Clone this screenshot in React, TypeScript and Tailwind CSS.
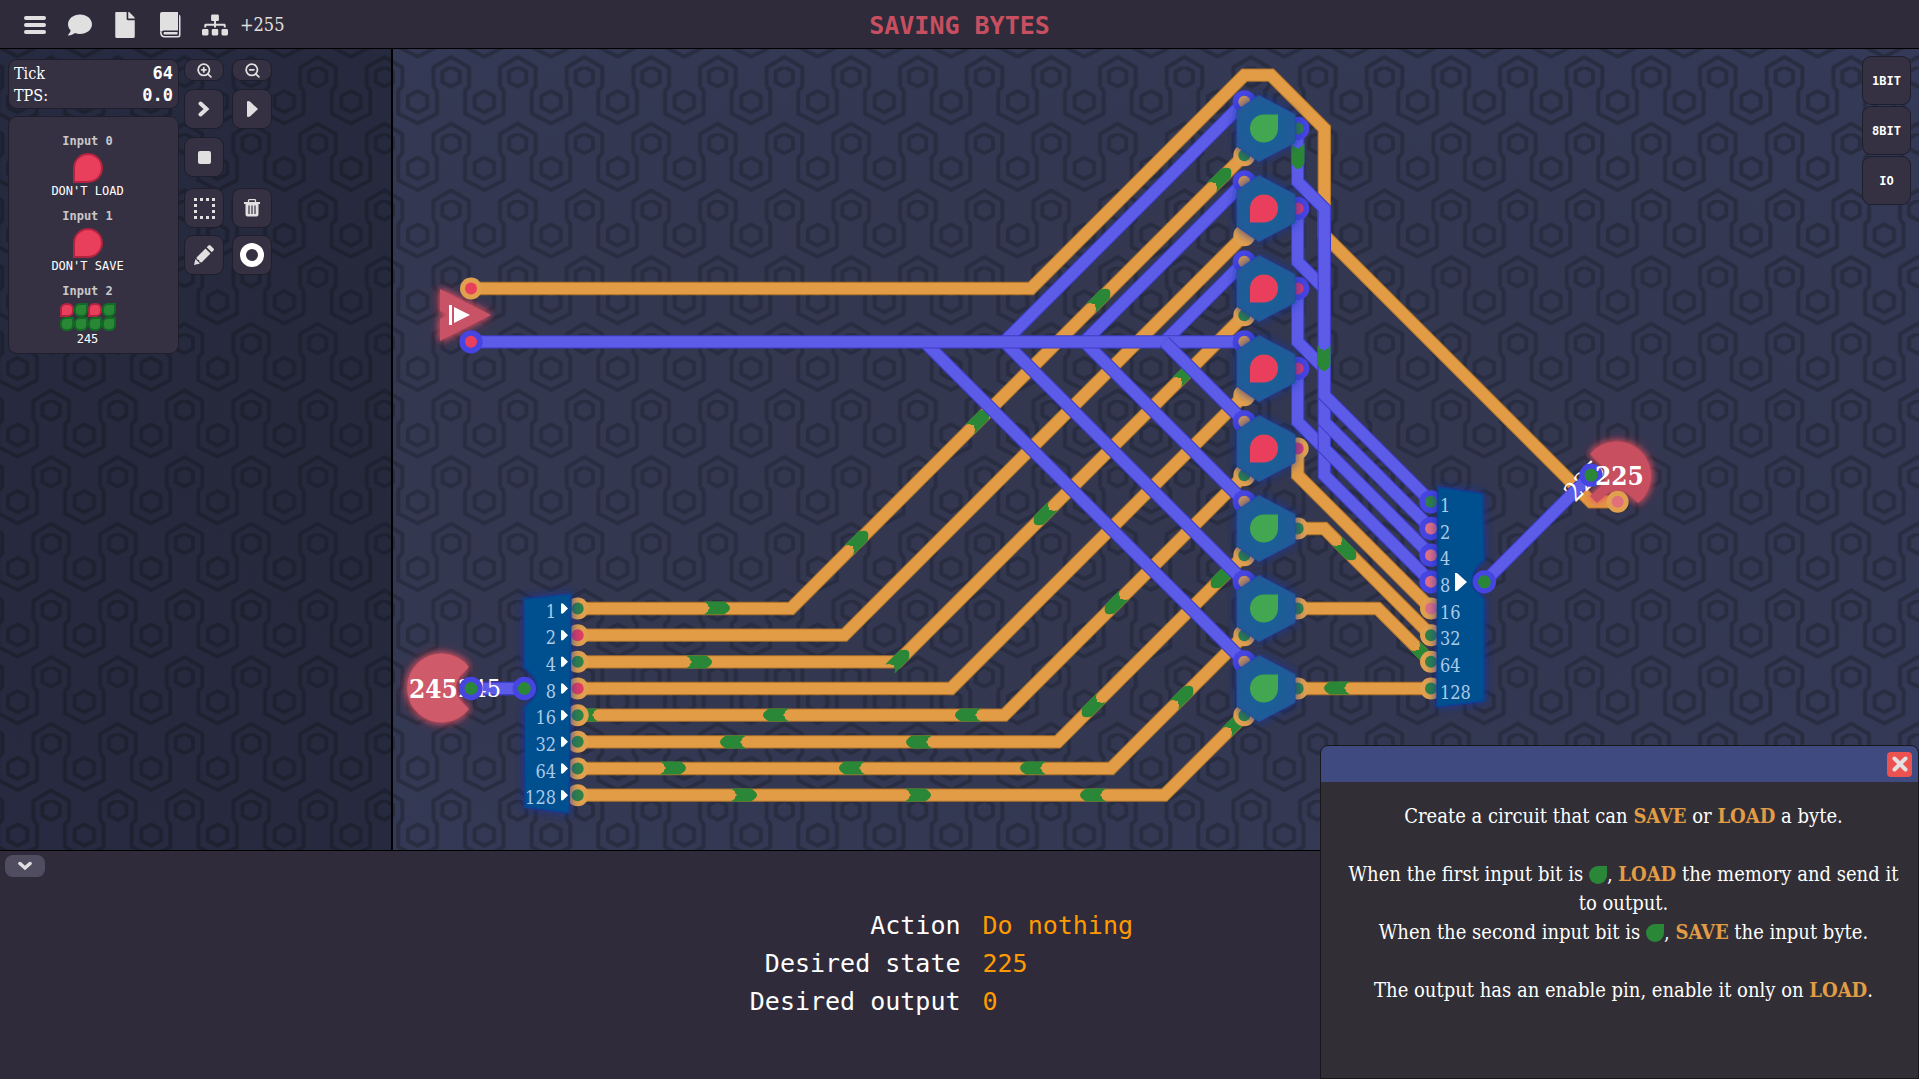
import type { ReactNode } from "react";
import { FaComment, FaFile, FaSitemap } from "react-icons/fa";
import { ZoomIn, ZoomOut } from "lucide-react";

/* ---------- circuit board grid ---------- */

const CELL = 80 / 3;
const gx = (i: number) => 471 + i * CELL;
const gy = (j: number) => 128.5 + j * CELL;

type Pt = [number, number];
type Hue = "orange" | "blue";

const hues = {
  orange: { core: "#e29c45", edge: "#b4772c", ring: "#e0a04e" },
  blue: { core: "#5c5ce8", edge: "#3e3cc9", ring: "#4645e2" },
};

const bits = [1, 0, 1, 0, 1, 1, 1, 1];
const GREEN = "#2a8737";
const RED = "#e93e5c";
const values = [1, 2, 4, 8, 16, 32, 64, 128];

const orangeWires: Pt[][] = [
  ...bits.map((_, k): Pt[] => [[4, 18 + k], [12 + 2 * k, 18 + k], [29, 3 * k + 1]]),
  [[0, 6], [21, 6], [29, -2], [30, -2], [32, 0], [32, 4], [42, 14], [43, 14]],
  [[31, 12], [31, 13], [36, 18]],
  [[31, 15], [32, 15], [36, 19]],
  [[31, 18], [34, 18], [36, 20]],
  [[31, 21], [36, 21]],
];

const blueWires: Pt[][] = [
  [[20, 8], [29, -1]],
  [[23, 8], [29, 2]],
  [[26, 8], [29, 5]],
  [[17, 8], [29, 20]],
  [[20, 8], [29, 17]],
  [[23, 8], [29, 14]],
  [[0, 8], [29, 8]],
  [[26, 8], [29, 11]],
  [[31, 9], [31, 11], [32, 12], [32, 13], [36, 17]],
  [[31, 6], [31, 8], [32, 9], [32, 12], [36, 16]],
  [[31, 3], [31, 5], [32, 6], [32, 11], [36, 15]],
  [[31, 0], [31, 2], [32, 3], [32, 10], [36, 14]],
  [[0, 21], [2, 21]],
  [[38, 17], [42, 13]],
];

/* x, y, heading in degrees */
const orangePulses: [number, number, number][] = [
  [717, 608, 0], [858, 541, -45], [979, 420, -45], [1100, 299, -45], [1221, 178, -45],
  [699, 662, 0], [899, 660, -45], [1044, 515, 135], [1186, 373, -45],
  [585, 715, 180], [776, 715, 180], [968, 715, 180], [1115, 604, 135],
  [733, 742, 180], [919, 742, 180], [1092, 707, 135], [1221, 578, 135],
  [673, 768, 0], [852, 768, 180], [1033, 768, 180], [1183, 696, -45],
  [744, 795, 0], [918, 795, 0], [1093, 795, 180], [1236, 723, -45],
  [1346, 550, 45], [1424, 655, 45], [1337, 688, 180],
];
const bluePulses: [number, number, number][] = [[1298, 156, 90], [1324, 358, 90]];

function Wire({ pts, hue }: { pts: Pt[]; hue: Hue }) {
  const p = pts.map(([i, j]) => `${gx(i)},${gy(j)}`).join(" ");
  return (
    <g fill="none">
      <polyline points={p} stroke={hues[hue].edge} strokeWidth={13.4} />
      <polyline points={p} stroke={hues[hue].core} strokeWidth={11.2} />
    </g>
  );
}

function Pulse({ x, y, a }: { x: number; y: number; a: number }) {
  return (
    <path
      transform={`translate(${x} ${y}) rotate(${a})`}
      d="M-13 -6.5H7Q13 -3 13 0Q13 3 7 6.5H-13L-9 3.5V2L-7 0L-9 -2V-3.5Z"
      fill={GREEN}
    />
  );
}

function Pin({ i, j, hue, fill, inner = 6 }: { i: number; j: number; hue: Hue; fill: string; inner?: number }) {
  return (
    <g>
      <circle cx={gx(i)} cy={gy(j)} r={hue === "blue" ? 11.7 : 11} fill={hues[hue].ring} />
      <circle cx={gx(i)} cy={gy(j)} r={inner} fill={fill} />
    </g>
  );
}

function Gate({ y, on }: { y: number; on: boolean }) {
  return (
    <g transform={`translate(1264 ${y})`}>
      <path
        d="M-5 -33L31 -14V14L-5 33L-27 18V-18Z"
        fill="url(#gateFill)"
        stroke="#2050a0"
        strokeWidth="1"
        strokeLinejoin="round"
        filter="url(#glowBlue)"
      />
      {on ? (
        <path d="M14 -14H0A14 14 0 1 0 14 0Z" fill="#43a650" />
      ) : (
        <path d="M-14 14H0A14 14 0 1 0 -14 0Z" fill={RED} />
      )}
    </g>
  );
}

function Circuit() {
  return (
    <svg className="absolute inset-0 h-full w-full" aria-label="Circuit board">
      <defs>
        <pattern
          id="hex"
          width="200"
          height="200"
          patternUnits="userSpaceOnUse"
          patternTransform="translate(0 -49) scale(0.33333)"
        >
          <g fill="none" stroke="#292d41" strokeWidth="12" strokeLinejoin="round">
            {[[0, 0], [-200, 0], [0, 200], [-200, 200], [0, -200], [-200, -200]].map(([x, y]) => (
              <path
                key={`${x}.${y}`}
                transform={`translate(${x} ${y})`}
                d="M100 60V2L153 -29L207 2V60L195 72V141L253 170L311 141V72L300 60"
              />
            ))}
            <path d="M153 0L179 15V46L153 60L127 46V15Z" />
            <path d="M53 73L82 88V122L53 137L24 122V88Z" />
          </g>
        </pattern>
        <radialGradient id="board" cx="0.5" cy="0.5" r="0.75">
          <stop offset="0.4" stopColor="#333750" />
          <stop offset="1" stopColor="#343a58" />
        </radialGradient>
        <radialGradient id="gateFill">
          <stop offset="0" stopColor="#1d6296" />
          <stop offset="1" stopColor="#205a98" />
        </radialGradient>
        <filter id="glowBlue" x="-50%" y="-50%" width="200%" height="200%">
          <feDropShadow dx="0" dy="0" stdDeviation="5" floodColor="#1230a0" floodOpacity="0.9" />
        </filter>
        <filter id="glowRed" x="-50%" y="-50%" width="200%" height="200%">
          <feDropShadow dx="0" dy="0" stdDeviation="3" floodColor="#e8505f" floodOpacity="0.8" />
          <feDropShadow dx="0" dy="0" stdDeviation="5" floodColor="#e8505f" floodOpacity="0.7" />
        </filter>
      </defs>
      <rect width="100%" height="100%" fill="url(#board)" />
      <rect width="100%" height="100%" fill="url(#hex)" />

      <g transform="translate(0 -49)">
        <path
          d="M440 289L491 315L440 341V319L448 315L440 311Z"
          fill="#c95366"
          filter="url(#glowRed)"
        />
        <path d="M449 305H452V325H449ZM454 307L470 315L454 323Z" fill="#fff" />

        {orangeWires.map((w, n) => <Wire key={n} pts={w} hue="orange" />)}
        {orangePulses.map(([x, y, a], n) => <Pulse key={n} x={x} y={y} a={a} />)}
        {blueWires.map((w, n) => <Wire key={n} pts={w} hue="blue" />)}
        {bluePulses.map(([x, y, a], n) => <Pulse key={n} x={x} y={y} a={a} />)}

        <Pin i={0} j={6} hue="orange" fill={RED} />
        <Pin i={0} j={8} hue="blue" fill={RED} />

        {bits.map((on, k) => (
          <g key={k}>
            <Pin i={29} j={3 * k - 1} hue="blue" fill="#cc935c" />
            <Pin i={29} j={3 * k + 1} hue="orange" fill={on ? "#2f8148" : "#dd9a50"} />
            <Pin i={31} j={3 * k} hue={k < 4 ? "blue" : "orange"} fill={k === 0 || k > 4 ? "#2f8148" : "#cf3d76"} />
          </g>
        ))}
        {values.map((v, k) => (
          <g key={v}>
            <Pin i={4} j={18 + k} hue="orange" fill={bits[k] ? "#2f8148" : "#dd3d64"} />
            <Pin
              i={36}
              j={14 + k}
              hue={k < 4 ? "blue" : "orange"}
              fill={k === 0 || k > 4 ? "#2f8148" : "#de6f86"}
            />
          </g>
        ))}

        {bits.map((_, k) => (
          <Gate key={k} y={gy(3 * k)} on={k === 0 || k > 4} />
        ))}

        {/* byte splitter */}
        <path
          d="M524 599L571 594L569 813L525 807V707L532 700Q537 694 537 688Q537 681 532 675L524 667Z"
          fill="#00508f"
          stroke="#0b3f96"
          strokeWidth="1.5"
          filter="url(#glowBlue)"
        />
        {values.map((v, k) => (
          <g key={v}>
            <text
              x={556}
              y={gy(18 + k) + 9}
              textAnchor="end"
              fill="#a9cbe8"
              className="font-['DejaVu_Serif_Condensed','DejaVu_Serif',serif] text-[18px]"
            >
              {v}
            </text>
            <path transform={`translate(561 ${gy(18 + k)})`} d="M0 -5H2L7 0L2 5H0Z" fill="#fff" />
          </g>
        ))}

        {/* 245 source */}
        <path
          d="M469 667L461 675Q456 681 456 688Q456 695 461 701L469 709A34.5 34.5 0 1 1 469 667Z"
          fill="#cf5a69"
          filter="url(#glowRed)"
        />
        <Wire pts={[[0, 21], [2, 21]]} hue="blue" />
        <text
          x={501}
          y={697}
          textAnchor="end"
          fill="#fff"
          className="font-['DejaVu_Serif_Condensed','DejaVu_Serif',serif] text-[25px]"
        >
          245
        </text>
        <text
          x={409}
          y={698}
          fill="#fff"
          className="font-['DejaVu_Serif_Condensed','DejaVu_Serif',serif] text-[26px] font-bold"
        >
          245
        </text>
        <Pin i={0} j={21} hue="blue" fill="#2a8737" inner={6.5} />
        <Pin i={2} j={21} hue="blue" fill="#2a8737" inner={6.5} />

        {/* byte maker */}
        <path
          d="M1438 487L1483 494L1484 560L1477 567Q1472 574 1472 582Q1472 590 1477 592L1484 599V701L1437 707Z"
          fill="#00508f"
          stroke="#0b3f96"
          strokeWidth="1.5"
          filter="url(#glowBlue)"
        />
        {values.map((v, k) => (
          <text
            key={v}
            x={1440}
            y={gy(14 + k) + 10}
            fill="#a9cbe8"
            className="font-['DejaVu_Serif_Condensed','DejaVu_Serif',serif] text-[18px]"
          >
            {v}
          </text>
        ))}
        <path d="M1455 573H1457L1467 582L1457 591H1455Z" fill="#fff" />
        <Pin i={38} j={17} hue="blue" fill="#2a8737" inner={6.5} />

        {/* 225 output */}
        <path
          d="M1590 454L1600 464Q1606 470 1606 476Q1606 482 1600 487L1590 496L1597 503L1608 493Q1617 488 1627 493L1638 503A34.5 34.5 0 1 0 1590 454Z"
          fill="#c74f60"
          filter="url(#glowRed)"
        />
        <text
          transform="translate(1575 503) rotate(-45)"
          fill="#fff"
          className="font-['DejaVu_Serif_Condensed','DejaVu_Serif',serif] text-[26px]"
        >
          225
        </text>
        <Pin i={42} j={13} hue="blue" fill="#2a8737" inner={6.5} />
        <Pin i={43} j={14} hue="orange" fill="#e07079" />
        <text
          x={1595}
          y={485}
          fill="#fff"
          className="font-['DejaVu_Serif_Condensed','DejaVu_Serif',serif] text-[26px] font-bold"
        >
          225
        </text>
      </g>
    </svg>
  );
}

/* ---------- chrome ---------- */

function ToolButton({ label, short, children }: { label: string; short?: boolean; children: ReactNode }) {
  return (
    <button
      aria-label={label}
      className={`flex w-[38px] items-center justify-center rounded-lg bg-[#353142] text-[#e0e0e0] shadow-[0_0_0_1px_#1d1f2c] ${
        short ? "h-5" : "h-[38px]"
      }`}
    >
      {children}
    </button>
  );
}

function IconBook() {
  return (
    <svg viewBox="0 0 21 26" className="h-[26px] w-[21px]" fill="#e0e0e0">
      <path d="M2 0H18V18.5H3.5Q1.5 19 1 20.5L0 19V2Q0 0 2 0Z" />
      <path d="M19 2.500Q20.500 3 20.500 5V23Q20.500 25.500 18 25.500H4Q0 25 0 20H1.500Q2 24 4.500 24H17.500Q19 24 19 22.500Z" />
      <path d="M4 20H17.500V22.500H4Q2.700 21.200 4 20Z" />
    </svg>
  );
}

function TopBar() {
  return (
    <header className="grid h-[49px] grid-cols-3 items-center border-b border-black bg-[#2f2b3b] px-6">
      <nav className="flex items-center pt-0.5 text-[#e0e0e0]">
        <button aria-label="Menu" className="flex h-[18px] w-[22px] flex-col justify-between">
          <span className="h-1 w-full rounded-full bg-[#e0e0e0]" />
          <span className="h-1 w-full rounded-full bg-[#e0e0e0]" />
          <span className="h-1 w-full rounded-full bg-[#e0e0e0]" />
        </button>
        <button aria-label="Chat" className="ml-[22px]"><FaComment size={24} /></button>
        <button aria-label="Notes" className="ml-5"><FaFile size={26} /></button>
        <button aria-label="Manual" className="ml-[22px]"><IconBook /></button>
        <button aria-label="Level tree" className="ml-[21px] flex items-center gap-3 font-['DejaVu_Serif_Condensed','DejaVu_Serif',serif] text-lg">
          <FaSitemap size={26} />
          +255
        </button>
      </nav>
      <h1 className="pt-1 text-center font-['DejaVu_Sans_Mono',monospace] text-[25px] leading-8 font-bold text-[#c74f60]">
        SAVING BYTES
      </h1>
    </header>
  );
}

function InputSlot({ name, value, children }: { name: string; value: string; children: ReactNode }) {
  return (
    <div className="flex flex-col items-center font-['DejaVu_Sans_Mono',monospace] text-xs">
      <span className="mb-[3px] leading-[18px] font-bold text-[#c9c8ca]">{name}</span>
      {children}
      <span className="leading-4 text-white">{value}</span>
    </div>
  );
}

function LeftPanel() {
  return (
    <aside className="z-10 flex w-[393px] items-start gap-[7px] border-r-2 border-black bg-black/25 pt-[11px] pl-[9px]">
      <div className="flex w-[169px] flex-col gap-[9px]">
        <dl className="rounded-lg bg-[#353142] px-[5px] pt-[3px] pb-px font-['DejaVu_Serif_Condensed','DejaVu_Serif',serif] text-base text-white shadow-[0_0_0_1px_#1d1f2c]">
          <div className="flex h-[22px] items-center justify-between">
            <dt>Tick</dt>
            <dd className="font-['DejaVu_Sans_Mono',monospace] text-[17px] font-bold">64</dd>
          </div>
          <div className="flex h-[22px] items-center justify-between">
            <dt>TPS:</dt>
            <dd className="font-['DejaVu_Sans_Mono',monospace] text-[17px] font-bold">0.0</dd>
          </div>
        </dl>
        <section className="flex flex-col items-center gap-2 rounded-lg bg-[#353142] pt-[15px] pr-3 pb-[6px] shadow-[0_0_0_1px_#1d1f2c]">
          <InputSlot name="Input 0" value="DON'T LOAD">
            <i className="size-[30px] rounded-full rounded-bl-none border-2 border-[#b02440] bg-[#e93e5c]" />
          </InputSlot>
          <InputSlot name="Input 1" value="DON'T SAVE">
            <i className="size-[30px] rounded-full rounded-bl-none border-2 border-[#b02440] bg-[#e93e5c]" />
          </InputSlot>
          <InputSlot name="Input 2" value="245">
            <div className="grid grid-cols-4">
              {[0, 1, 0, 1, 1, 1, 1, 1].map((b, n) => (
                <i
                  key={n}
                  className={
                    b
                      ? "size-[14px] rounded-[6px] rounded-tr-none border-2 border-[#126b22] bg-[#2a8737]"
                      : "size-[14px] rounded-[6px] rounded-bl-none border-2 border-[#b02440] bg-[#e93e5c]"
                  }
                />
              ))}
            </div>
          </InputSlot>
        </section>
      </div>

      <div className="flex flex-col">
        <div className="flex gap-[10px]">
          <ToolButton label="Zoom in" short><ZoomIn size={17} strokeWidth={2.5} /></ToolButton>
          <ToolButton label="Zoom out" short><ZoomOut size={17} strokeWidth={2.5} /></ToolButton>
        </div>
        <div className="mt-[10px] flex gap-[10px]">
          <ToolButton label="Step">
            <svg viewBox="0 0 12 16" className="h-4 w-3"><path d="M2.500 2.500L8.500 8L2.500 13.500" fill="none" stroke="currentColor" strokeWidth="4" strokeLinecap="round" /></svg>
          </ToolButton>
          <ToolButton label="Run">
            <svg viewBox="0 0 11 16" className="h-4 w-[11px]"><path d="M0 1Q0 0 1 0L3 .5L11 8L3 15.500L1 16Q0 16 0 15Z" fill="currentColor" /></svg>
          </ToolButton>
        </div>
        <div className="mt-[10px] flex">
          <ToolButton label="Stop"><span className="size-[13px] rounded-[2px] bg-[#e0e0e0]" /></ToolButton>
        </div>
        <div className="mt-[13px] flex gap-[10px]">
          <ToolButton label="Select area">
            <svg viewBox="0 0 21 21" className="size-[21px]" fill="currentColor">
              {[0, 6, 12, 18].map((p) => (
                <g key={p}>
                  <rect x={p} y="0" width="3" height="3" />
                  <rect x={p} y="18" width="3" height="3" />
                  <rect x="0" y={p} width="3" height="3" />
                  <rect x="18" y={p} width="3" height="3" />
                </g>
              ))}
            </svg>
          </ToolButton>
          <ToolButton label="Delete">
            <svg viewBox="0 0 16 18" className="h-[18px] w-4">
              <path d="M4.500 3V1.500Q4.500 .7 5.300 .7H10.700Q11.500 .7 11.500 1.500V3" fill="none" stroke="currentColor" strokeWidth="1.300" />
              <path d="M0 3H16V5H0Z" fill="currentColor" />
              <path d="M1.500 5H14.500V15.500Q14.500 17.500 12.500 17.500H3.500Q1.500 17.500 1.500 15.500Z" fill="currentColor" />
              <path d="M5 6.500V15M8 6.500V15M11 6.500V15" stroke="#353142" strokeWidth="1.200" />
            </svg>
          </ToolButton>
        </div>
        <div className="mt-[9px] flex gap-[10px]">
          <ToolButton label="Draw">
            <svg viewBox="0 0 20 20" className="size-5" fill="currentColor">
              <path d="M0 20L1.500 14L6 18.500Z" />
              <path d="M2.500 12.500L11.500 3.500L16.500 8.500L7.500 17.500L5.500 17L5 15L3 14.500Z" />
              <path d="M12.700 2.300L14.500 .5Q15.500 -.5 16.500 .5L19.500 3.500Q20.500 4.500 19.500 5.500L17.700 7.300Z" />
            </svg>
          </ToolButton>
          <ToolButton label="Wire colour"><span className="size-6 rounded-full border-6 border-white" /></ToolButton>
        </div>
      </div>
    </aside>
  );
}

function Leaf() {
  return <span className="inline-block size-[18px] rounded-full rounded-tr-none bg-[#2a8737] align-[-3px]" />;
}

function Key({ children }: { children: ReactNode }) {
  return <b className="font-bold text-[#e29c45]">{children}</b>;
}

function MissionDialog() {
  return (
    <section
      aria-label="Mission"
      className="absolute right-0 bottom-0 z-20 flex h-[334px] w-[599px] flex-col overflow-hidden rounded-t-lg border border-[#17171c] bg-[#312f35]"
    >
      <div className="flex h-9 items-center justify-end bg-[#3f4a80] pr-[6px]">
        <button
          aria-label="Close"
          className="flex h-[25px] w-[25px] items-center justify-center rounded bg-[#ec5250]"
        >
          <svg viewBox="0 0 16 16" className="size-4"><path d="M2.500 2.500L13.500 13.500M13.500 2.500L2.500 13.500" stroke="#e4e0e2" strokeWidth="4" strokeLinecap="round" /></svg>
        </button>
      </div>
      <div className="flex flex-col gap-[29px] pt-5 pr-4 pl-6 text-center font-['DejaVu_Serif_Condensed','DejaVu_Serif',serif] text-xl leading-[29px] text-white">
        <p>Create a circuit that can <Key>SAVE</Key> or <Key>LOAD</Key> a byte.</p>
        <p>
          When the first input bit is <Leaf />, <Key>LOAD</Key> the memory and send it to output.
          <br />
          When the second input bit is <Leaf />, <Key>SAVE</Key> the input byte.
        </p>
        <p>The output has an enable pin, enable it only on <Key>LOAD</Key>.</p>
      </div>
    </section>
  );
}

function StatusPanel() {
  const rows = [
    ["Action", "Do nothing"],
    ["Desired state", "225"],
    ["Desired output", "0"],
  ];
  return (
    <footer className="border-t border-black bg-[#2f2b3b] pb-[58px]">
      <button aria-label="Collapse" className="mt-1 ml-[5px] flex h-[22px] w-10 items-center justify-center rounded-lg bg-[#514d60]">
        <svg viewBox="0 0 14 10" className="h-[10px] w-[14px]"><path d="M2 2.500L7 7L12 2.500" fill="none" stroke="#e0e0e0" strokeWidth="3.500" strokeLinecap="round" /></svg>
      </button>
      <dl className="mt-[30px] pl-6 font-['DejaVu_Sans_Mono',monospace] text-[25px] leading-[38px] font-medium">
        {rows.map(([k, v]) => (
          <div key={k} className="grid grid-cols-2 gap-[22px]">
            <dt className="text-right text-white">{k}</dt>
            <dd className="text-[#ff9a00]">{v}</dd>
          </div>
        ))}
      </dl>
    </footer>
  );
}

export default function App() {
  return (
    <div className="relative flex min-h-screen flex-col overflow-hidden bg-[#2f2b3b]">
      <TopBar />
      <main className="relative flex flex-1 justify-between">
        <Circuit />
        <LeftPanel />
        <div className="z-10 mt-2 mr-[9px] flex flex-col gap-[3px]">
          {["1BIT", "8BIT", "IO"].map((t) => (
            <button
              key={t}
              className="size-[47px] rounded-lg bg-[#353142] font-['DejaVu_Sans_Mono',monospace] text-xs font-bold text-white shadow-[0_0_0_1px_#1d1f2c]"
            >
              {t}
            </button>
          ))}
        </div>
      </main>
      <StatusPanel />
      <MissionDialog />
    </div>
  );
}
